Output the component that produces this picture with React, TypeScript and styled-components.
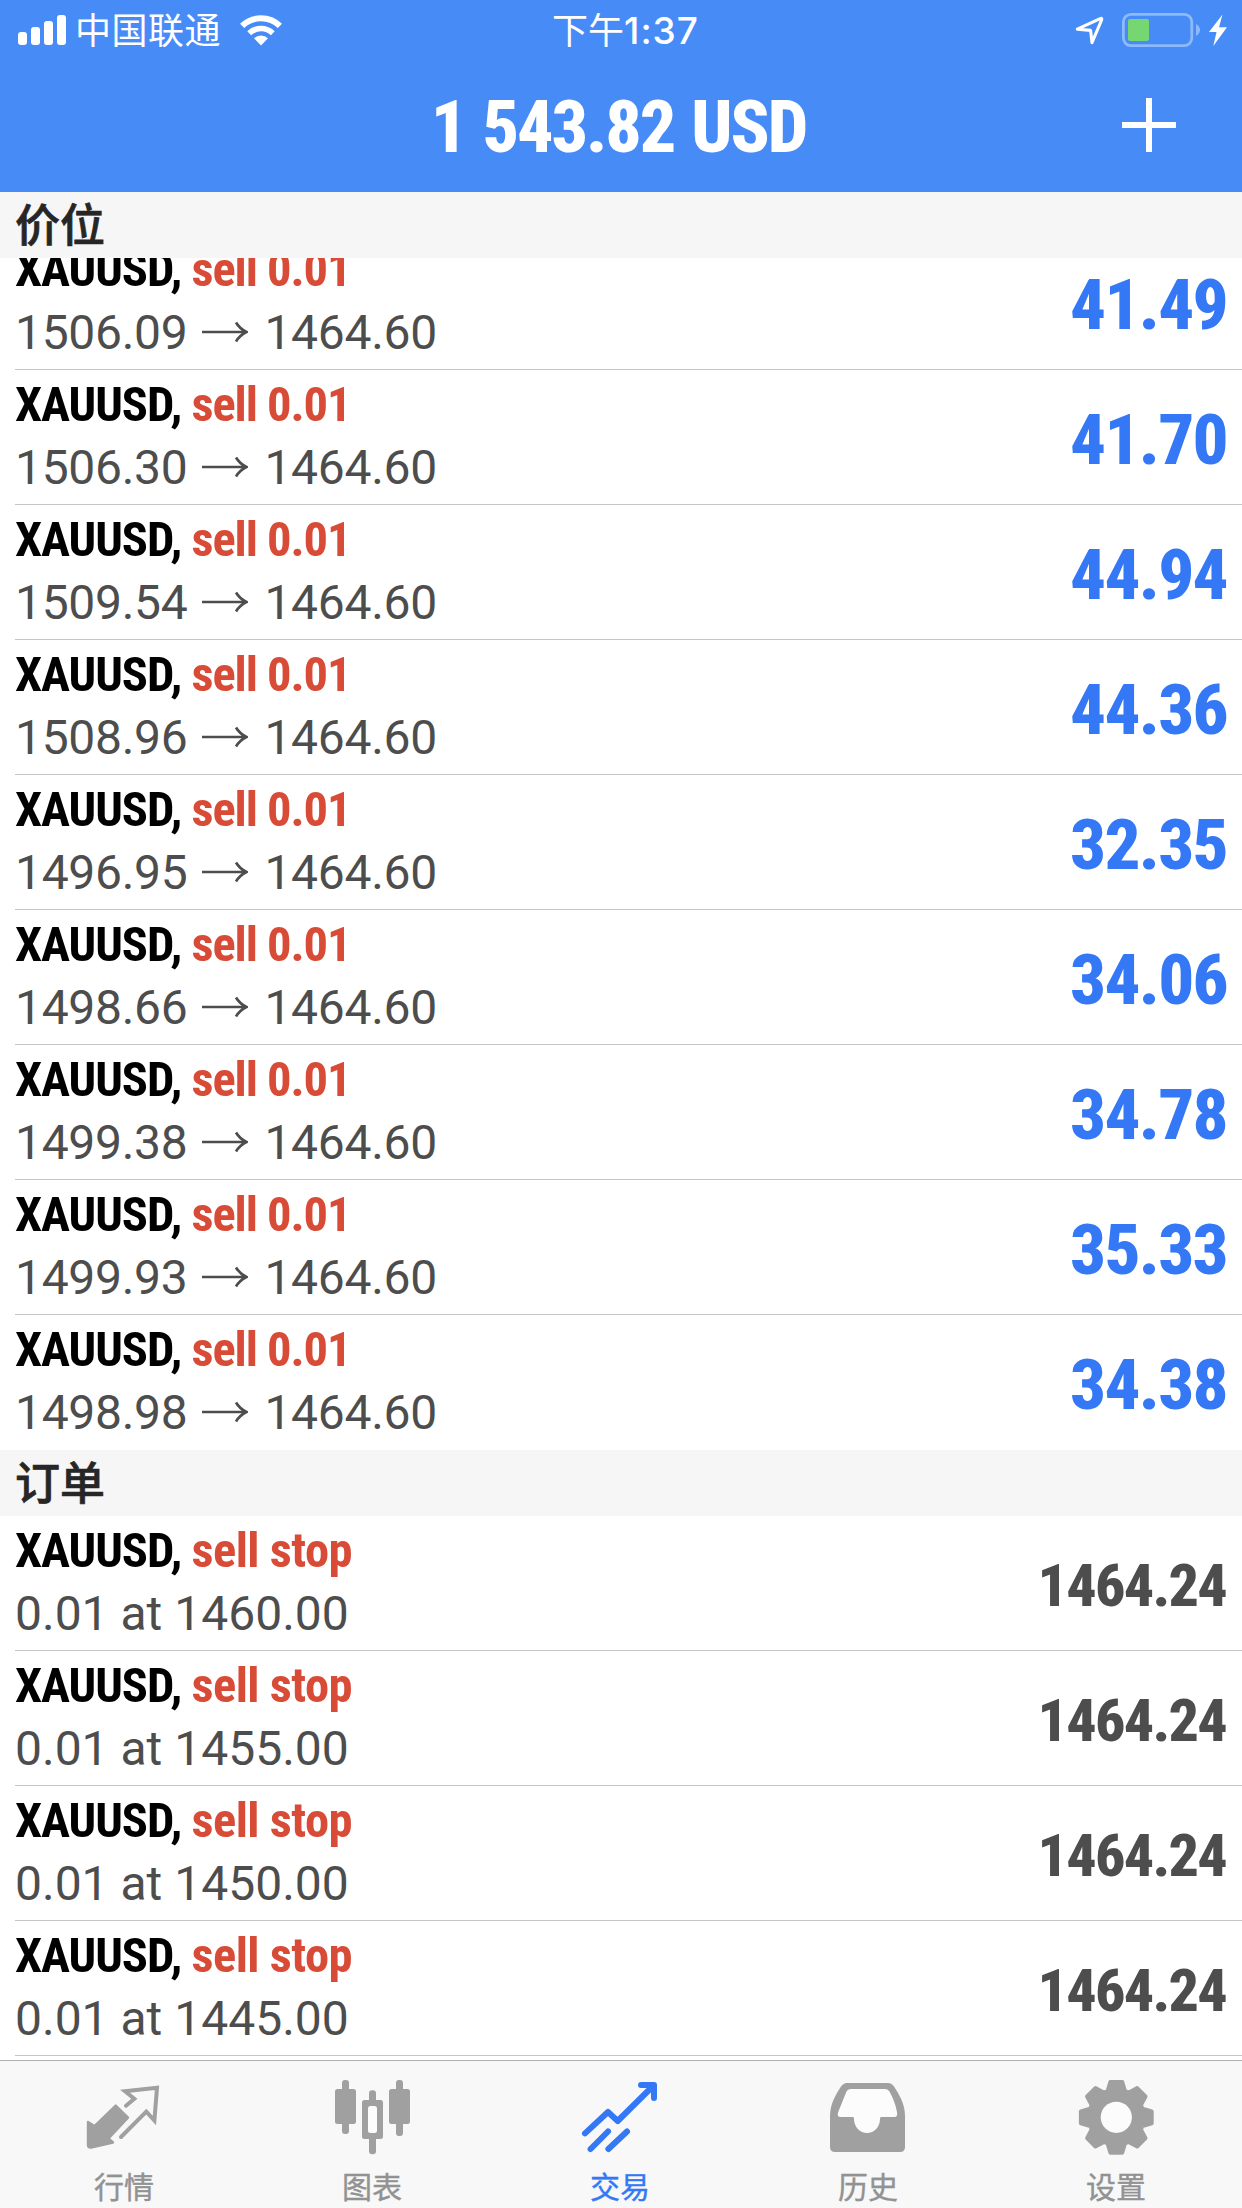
import React from 'react';
import styled, { createGlobalStyle } from 'styled-components';

const color = {
  header: '#478bf7',
  blue: '#3478f6',
  red: '#d84b37',
  text: '#4d4d4d',
  section: '#f6f6f6',
  tabBar: '#f8f8f8',
  icon: '#a0a0a0',
  label: '#929292',
  line: '#c4c4c6',
};

const condensed = '"Roboto Condensed", Roboto, "Liberation Sans", sans-serif';
const cjk = '"Noto Sans CJK SC", sans-serif';

const GlobalStyle = createGlobalStyle`
  *, *::before, *::after { box-sizing: border-box; }
  body { margin: 0; background: #fff; }
  svg { display: block; flex: none; }
`;

const Screen = styled.div`
  width: 1242px;
  height: 2208px;
  display: flex;
  flex-direction: column;
  overflow: hidden;
  background: #fff;
`;

const Header = styled.header`
  flex: none;
  height: 192px;
  background: ${color.header};
  color: #fff;
`;

const StatusBar = styled.div`
  display: grid;
  grid-template-columns: 1fr auto 1fr;
  align-items: start;
  height: 60px;
  padding: 0 15px 0 18px;
`;

const StatusLeft = styled.div`
  display: flex;
  align-items: flex-start;
  padding-top: 2px;
  svg:first-child { margin: 13px 9px 0 0; }
  svg:last-child { margin: 13px 0 0 19px; }
`;

const Carrier = styled.span`
  font: 400 36px/52px ${cjk};
  letter-spacing: 0.5px;
`;

const Time = styled.span`
  padding: 2px 0 0 6px;
  font: 400 36px/52px ${cjk};
`;

const Digits = styled.span`
  font-family: Inter, sans-serif;
  font-size: 37px;
  font-weight: 500;
  letter-spacing: 1px;
`;

const StatusRight = styled.div`
  display: flex;
  justify-content: flex-end;
  padding-top: 13px;
`;

const TitleBar = styled.div`
  display: grid;
  grid-template-columns: 1fr auto 1fr;
  align-items: start;
  height: 132px;
`;

const Title = styled.h1`
  grid-column: 2;
  margin: 0;
  padding: 25px 5px 0 0;
  font: 800 72px/85px ${condensed};
  letter-spacing: -2.1px;
  word-spacing: 2.6px;
`;

const AddButton = styled.button`
  justify-self: end;
  margin: 38px 66px 0 0;
  padding: 0;
  border: 0;
  background: none;
  color: inherit;
`;

const List = styled.main`
  flex: 1;
  min-height: 0;
  overflow: hidden;
`;

const SectionTitle = styled.h2`
  position: relative;
  z-index: 1;
  height: 66px;
  margin: 0;
  padding-left: 15px;
  background: ${color.section};
  color: #262626;
  font: 500 45px/62px ${cjk};
  -webkit-text-stroke: 0.7px #262626;
`;

const Rows = styled.ul<{ $scrolled?: number }>`
  margin: ${p => -(p.$scrolled ?? 0)}px 0 0;
  padding: 0;
  list-style: none;
`;

const Row = styled.li`
  display: flex;
  justify-content: space-between;
  height: 135px;
  margin-left: 15px;
  border-bottom: 1px solid ${color.line};
`;

const PositionRow = styled(Row)`
  &:last-child { border-bottom-color: transparent; }
`;

const Details = styled.div`
  display: flex;
  flex-direction: column;
  gap: 6px;
  padding-top: 6px;
`;

const Symbol = styled.div`
  color: #000;
  font: 700 48.5px/57px ${condensed};
  letter-spacing: -1.05px;
  white-space: pre;
`;

const Side = styled.span<{ $spacing?: number }>`
  color: ${color.red};
  letter-spacing: ${p => p.$spacing ?? -1.05}px;
`;

const Price = styled.div<{ $tight?: boolean }>`
  display: flex;
  color: ${color.text};
  font: 400 48px/57px Roboto, "Liberation Sans", sans-serif;
  letter-spacing: ${p => (p.$tight ? '-0.3px' : '0')};
  white-space: pre;
  svg { margin: 17px 16px 0 15px; }
`;

const Profit = styled.div`
  align-self: center;
  padding: 5px 15px 0 0;
  color: ${color.blue};
  font: 800 71px/83px ${condensed};
  letter-spacing: -1.7px;
`;

const Quote = styled.div`
  align-self: center;
  padding: 5px 16px 0 0;
  color: ${color.text};
  font: 800 60px/71px ${condensed};
  letter-spacing: -1.75px;
`;

const TabBar = styled.nav`
  flex: none;
  display: grid;
  grid-template-columns: repeat(5, 248px);
  height: 148px;
  padding-top: 16px;
  border-top: 1px solid #b0b2b0;
  background: ${color.tabBar};
`;

const Tab = styled.a<{ $active?: boolean }>`
  display: flex;
  flex-direction: column;
  align-items: center;
  gap: 6px;
  color: ${p => (p.$active ? color.blue : color.icon)};
`;

const TabLabel = styled.span<{ $active?: boolean }>`
  color: ${p => (p.$active ? color.blue : color.label)};
  font: 400 30px/44px ${cjk};
  -webkit-text-stroke: 0.4px currentColor;
`;

const SignalIcon = () => (
  <svg width="48" height="30" viewBox="0 0 48 30" fill="currentColor">
    <rect x="0" y="17" width="9" height="13" rx="3" />
    <rect x="13" y="12" width="9" height="18" rx="3" />
    <rect x="26" y="6" width="9" height="24" rx="3" />
    <rect x="39" y="0" width="9" height="30" rx="3" />
  </svg>
);

const WifiIcon = () => (
  <svg width="42" height="31" viewBox="0 0 42 31" fill="none" stroke="currentColor">
    <path d="M2.1 10.9A27.2 27.2 0 0 1 39.9 10.9" strokeWidth="6" />
    <path d="M9.2 18.3A17 17 0 0 1 32.8 18.3" strokeWidth="5.6" />
    <path d="M21 30.5L14 23.3A10 10 0 0 1 28 23.3Z" fill="currentColor" stroke="none" />
  </svg>
);

const PowerIcons = () => (
  <svg width="152" height="34" viewBox="1075 13 152 34" fill="none">
    <path d="M1077.3 29.2L1100.2 18.6Q1102.4 17.8 1101.6 20L1092 42.6L1090.6 30.4Z" stroke="#fff" strokeWidth="3.1" strokeLinejoin="round" />
    <rect x="1123.4" y="14.4" width="68.4" height="31.2" rx="7.5" stroke="#8dbafb" strokeWidth="2.8" />
    <rect x="1128" y="19" width="21" height="22" rx="2" fill="#76d672" />
    <path d="M1196 24Q1200 26.5 1200 30T1196 36Z" fill="#8dbafb" />
    <path d="M1222.5 14.5L1209 32H1216.5L1213.3 46L1227 27.3H1219Z" fill="#fff" />
  </svg>
);

const PlusIcon = () => (
  <svg width="54" height="54" viewBox="0 0 54 54" stroke="currentColor" strokeWidth="6">
    <path d="M27 0V54M0 27H54" />
  </svg>
);

const ArrowIcon = () => (
  <svg width="46" height="22" viewBox="0 0 46 22" fill="none" stroke="currentColor" strokeWidth="2.7">
    <path d="M0 11H44M34 1.5Q37.5 7.5 44.5 11Q37.5 14.5 34 20.5" />
  </svg>
);

const QuotesIcon = () => (
  <svg width="80" height="80" viewBox="0 0 80 80" fill="none" stroke="currentColor" strokeLinejoin="round" strokeLinecap="round">
    <path d="M4 45L10.5 49L31.7 28.5L44 40.7L24.5 61.5L29 65.5L7 70.6Q4 71 4 68Z" fill="currentColor" strokeWidth="2.4" />
    <path d="M42 28.7L50.3 21.8L41 14.3L73 10.7L70.4 43.5L62.3 34.7L37 60" strokeWidth="4" strokeLinejoin="miter" />
  </svg>
);

const ChartIcon = () => (
  <svg width="80" height="80" viewBox="0 0 80 80" fill="currentColor">
    <rect x="10" y="3" width="7" height="54" rx="3" />
    <rect x="3" y="12" width="21" height="35" rx="2.5" />
    <rect x="64" y="3" width="7" height="56" rx="3" />
    <rect x="57" y="12" width="21" height="35" rx="2.5" />
    <rect x="37" y="13.3" width="7" height="64" rx="3" />
    <rect x="30" y="23" width="21" height="39" rx="2.5" />
    <rect x="36" y="29" width="9" height="27" rx="2.5" fill="#fcfcfc" />
  </svg>
);

const TradeIcon = () => (
  <svg width="80" height="80" viewBox="0 0 80 80" fill="none" stroke="currentColor" strokeWidth="6" strokeLinejoin="round" strokeLinecap="round">
    <path d="M5 56.4L28 35L37.7 44L73 9" />
    <path d="M61 8H74V21" />
    <path d="M10.6 72L28 54.5M28.4 72L47 54.5" />
  </svg>
);

const HistoryIcon = () => (
  <svg width="80" height="80" viewBox="0 0 80 80">
    <path
      d="M2 70V39C2 27 7.5 18 13 9.5Q15.500 6 18.700 6H60.300Q63.500 6 66 9.5C71.500 18 77 27 77 39V70Q77 75 72 75H7Q2 75 2 70Z"
      fill="currentColor"
    />
    <path
      d="M22.500 12Q19.600 12 18.500 14.500L10.200 35Q8.500 40 12.500 40H25Q26 40 26 42A13 14 0 0 0 52 42Q52 40 53 40H66.500Q70 40 69 35Q67 24.500 61.500 14.500Q60 12 57.500 12Z"
      fill="#fcfcfc"
    />
  </svg>
);

const gearPoints = Array.from({ length: 8 }, (_, tooth) =>
  [[-18.5, 27.5], [-9.5, 35.9], [9.5, 35.9], [18.5, 27.5]]
    .map(([angle, radius]) => {
      const a = ((tooth * 45 + angle) * Math.PI) / 180;
      return `${(40.3 + radius * Math.sin(a)).toFixed(2)},${(40.3 - radius * Math.cos(a)).toFixed(2)}`;
    })
    .join(' '),
).join(' ');

const SettingsIcon = () => (
  <svg width="80" height="80" viewBox="0 0 80 80">
    <polygon points={gearPoints} fill="currentColor" stroke="currentColor" strokeWidth="4" strokeLinejoin="round" />
    <circle cx="40.3" cy="40.3" r="15.6" fill="#fcfcfc" />
  </svg>
);

const positions = [
  ['1506.09', '41.49'],
  ['1506.30', '41.70'],
  ['1509.54', '44.94'],
  ['1508.96', '44.36'],
  ['1496.95', '32.35'],
  ['1498.66', '34.06'],
  ['1499.38', '34.78'],
  ['1499.93', '35.33'],
  ['1498.98', '34.38'],
];

const orders = ['1460.00', '1455.00', '1450.00', '1445.00'];

const tabs = [
  { label: '行情', Icon: QuotesIcon },
  { label: '图表', Icon: ChartIcon },
  { label: '交易', Icon: TradeIcon, active: true },
  { label: '历史', Icon: HistoryIcon },
  { label: '设置', Icon: SettingsIcon },
];

export default function App() {
  return (
    <Screen>
      <GlobalStyle />
      <Header>
        <StatusBar>
          <StatusLeft>
            <SignalIcon />
            <Carrier>中国联通</Carrier>
            <WifiIcon />
          </StatusLeft>
          <Time>下午<Digits>1:37</Digits></Time>
          <StatusRight>
            <PowerIcons />
          </StatusRight>
        </StatusBar>
        <TitleBar>
          <Title>1 543.82 USD</Title>
          <AddButton>
            <PlusIcon />
          </AddButton>
        </TitleBar>
      </Header>
      <List>
        <SectionTitle>价位</SectionTitle>
        <Rows $scrolled={23}>
          {positions.map(([open, profit]) => (
            <PositionRow key={open}>
              <Details>
                <Symbol>XAUUSD, <Side>sell 0.01</Side></Symbol>
                <Price $tight>
                  <span>{open}</span>
                  <ArrowIcon />
                  <span>1464.60</span>
                </Price>
              </Details>
              <Profit>{profit}</Profit>
            </PositionRow>
          ))}
        </Rows>
        <SectionTitle>订单</SectionTitle>
        <Rows>
          {orders.map(price => (
            <Row key={price}>
              <Details>
                <Symbol>XAUUSD, <Side $spacing={-0.5}>sell stop</Side></Symbol>
                <Price>0.01 at {price}</Price>
              </Details>
              <Quote>1464.24</Quote>
            </Row>
          ))}
        </Rows>
      </List>
      <TabBar>
        {tabs.map(({ label, Icon, active }) => (
          <Tab key={label} $active={active}>
            <Icon />
            <TabLabel $active={active}>{label}</TabLabel>
          </Tab>
        ))}
      </TabBar>
    </Screen>
  );
}
